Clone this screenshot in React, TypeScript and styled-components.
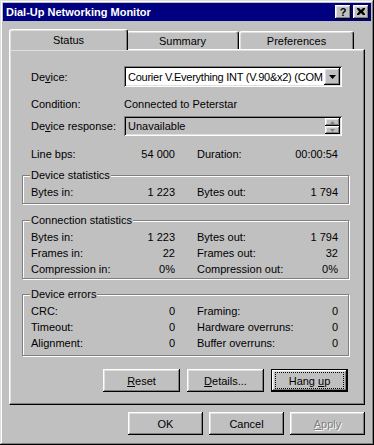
import React from "react";
import styled, { createGlobalStyle, css } from "styled-components";

const face = "#c0c0c0";
const font = `"Liberation Sans", Arial, sans-serif`;

const raised = css`
    box-shadow: inset -1px -1px 0 #000, inset 1px 1px 0 #fff, inset -2px -2px 0 #808080, inset 2px 2px 0 #dfdfdf;
`;

const sunken = css`
    box-shadow: inset 1px 1px 0 #808080, inset -1px -1px 0 #fff, inset 2px 2px 0 #000, inset -2px -2px 0 #dfdfdf;
`;

const GlobalStyle = createGlobalStyle`
    html, body {
        margin: 0;
        padding: 0;
        background: ${face};
    }
    body {
        font-family: ${font};
        font-size: 11px;
        color: #000;
    }
`;

const Window = styled.div`
    width: 374px;
    height: 445px;
    box-sizing: border-box;
    padding: 3px;
    background: ${face};
    display: flex;
    flex-direction: column;
    box-shadow: inset -1px -1px 0 #000, inset 1px 1px 0 #dfdfdf, inset -2px -2px 0 #808080, inset 2px 2px 0 #fff;
`;

const TitleBar = styled.div`
    height: 18px;
    background: #000080;
    display: flex;
    align-items: center;
    padding: 0 2px 0 3px;
`;

const Title = styled.span`
    flex: 1;
    color: #fff;
    font-weight: bold;
    font-size: 11px;
    white-space: nowrap;
`;

const CaptionButton = styled.div`
    width: 16px;
    height: 14px;
    box-sizing: border-box;
    background: ${face};
    display: flex;
    align-items: center;
    justify-content: center;
    font-weight: bold;
    font-size: 11px;
    line-height: 14px;
    padding-bottom: 1px;
    & + & {
        margin-left: 2px;
    }
    ${raised}
`;

const Body = styled.div`
    flex: 1;
    display: flex;
    flex-direction: column;
    padding: 8px 6px 7px 6px;
`;

const TabStrip = styled.div`
    height: 20px;
    display: flex;
    align-items: flex-end;
    padding-left: 2px;
`;

const Tab = styled.div<{ $active?: boolean; $w: number }>`
    width: ${(p) => p.$w}px;
    height: 18px;
    box-sizing: border-box;
    border-top: 1px solid #fff;
    border-left: 1px solid #fff;
    border-right: 1px solid #000;
    border-radius: 3px 3px 0 0;
    box-shadow: inset -1px 0 0 #808080, inset 1px 1px 0 #dfdfdf;
    background: ${face};
    display: flex;
    align-items: center;
    justify-content: center;
    padding-top: 1px;
    ${(p) =>
        p.$active &&
        css`
            height: 21px;
            margin: 0 -2px -1px -2px;
            padding-top: 0;
            padding-bottom: 1px;
            position: relative;
            z-index: 1;
        `}
`;

const Panel = styled.div`
    height: 356px;
    box-sizing: border-box;
    border-top: 1px solid #fff;
    border-left: 1px solid #fff;
    border-right: 1px solid #000;
    border-bottom: 1px solid #000;
    box-shadow: inset -1px -1px 0 #808080, inset 1px 1px 0 #dfdfdf;
    padding: 16px 14px 0 12px;
    display: flex;
    flex-direction: column;
`;

const Form = styled.div`
    padding-left: 9px;
    display: flex;
    flex-direction: column;
`;

const FieldRow = styled.div<{ $h: number; $top?: number }>`
    height: ${(p) => p.$h}px;
    margin-top: ${(p) => p.$top || 0}px;
    display: flex;
    align-items: center;
    white-space: nowrap;
`;

const Label = styled.span`
    width: 93px;
    flex: none;
`;

const Field = styled.div<{ $white?: boolean; $h: number }>`
    width: 218px;
    height: ${(p) => p.$h}px;
    box-sizing: border-box;
    padding: 2px;
    display: flex;
    align-items: center;
    background: ${(p) => (p.$white ? "#fff" : face)};
    ${sunken}
`;

const FieldText = styled.span<{ $tight?: boolean }>`
    flex: 1;
    padding-left: 2px;
    white-space: nowrap;
    overflow: hidden;
    letter-spacing: ${(p) => (p.$tight ? "-0.25px" : "0")};
`;

const DropButton = styled.div`
    width: 16px;
    height: 17px;
    flex: none;
    box-sizing: border-box;
    background: ${face};
    display: flex;
    align-items: center;
    justify-content: center;
    ${raised}
`;

const Spin = styled.div`
    width: 15px;
    flex: none;
    display: flex;
    flex-direction: column;
`;

const SpinButton = styled.div`
    height: 8px;
    box-sizing: border-box;
    background: ${face};
    display: flex;
    align-items: center;
    justify-content: center;
    ${raised}
`;

const StatGrid = styled.div`
    display: grid;
    grid-template-columns: 144px 141px;
    grid-auto-rows: 16px;
    column-gap: 22px;
    white-space: nowrap;
`;

const Stat = styled.div`
    display: flex;
    align-items: center;
    justify-content: space-between;
`;

const Group = styled.fieldset<{ $top: number; $bottom: number }>`
    margin: ${(p) => p.$top}px 1px 0 0;
    min-width: 0;
    padding: 2px 0 ${(p) => p.$bottom}px 8px;
    border: 1px solid #808080;
    box-shadow: 1px 1px 0 #fff, inset 1px 1px 0 #fff;
`;

const Legend = styled.legend`
    margin-left: -1px;
    padding: 0 1px;
    line-height: 13px;
    font-size: 11px;
    background: ${face};
`;

const ButtonRow = styled.div<{ $gap: number; $top: number; $right?: number }>`
    display: flex;
    justify-content: flex-end;
    gap: ${(p) => p.$gap}px;
    margin-top: ${(p) => p.$top}px;
    padding-right: ${(p) => p.$right || 0}px;
`;

const Button = styled.button<{ $w: number; $default?: boolean }>`
    width: ${(p) => p.$w}px;
    height: 23px;
    box-sizing: border-box;
    border: 0;
    padding: 0;
    background: ${face};
    font-family: ${font};
    font-size: 11px;
    color: #000;
    display: flex;
    align-items: center;
    justify-content: center;
    white-space: pre;
    ${raised}
    ${(p) =>
        p.$default &&
        css`
            padding: 3px 4px;
            box-shadow: inset 0 0 0 1px #000, inset -2px -2px 0 #000, inset 2px 2px 0 #fff, inset -3px -3px 0 #808080,
                inset 3px 3px 0 #dfdfdf;
        `}
    &:disabled {
        color: #808080;
        text-shadow: 1px 1px 0 #fff;
    }
`;

const FocusRing = styled.span`
    flex: 1;
    align-self: stretch;
    border: 1px dotted #000;
    display: flex;
    align-items: center;
    justify-content: center;
`;

const DownArrow = ({ color = "#000" }: { color?: string }) => (
    <svg width="7" height="4" viewBox="0 0 7 4">
        <polygon points="0,0 7,0 3.5,4" fill={color} />
    </svg>
);

const SmallArrow = ({ up }: { up?: boolean }) => (
    <svg width="5" height="3" viewBox="0 0 5 3">
        <polygon points={up ? "2.5,0 5,3 0,3" : "0,0 5,0 2.5,3"} fill="#808080" />
    </svg>
);

const CloseGlyph = () => (
    <svg width="8" height="7" viewBox="0 0 8 7">
        <path d="M0 0h2l2 2 2-2h2v1L6 3.5 8 6v1H6L4 5 2 7H0V6l2-2.5L0 1z" fill="#000" />
    </svg>
);

type StatItem = [string, string];

const StatRows: React.FC<{ items: StatItem[] }> = ({ items }) => (
    <StatGrid>
        {items.map(([label, value]) => (
            <Stat key={label}>
                <span>{label}</span>
                <span>{value}</span>
            </Stat>
        ))}
    </StatGrid>
);

export default function App() {
    return (
        <>
            <GlobalStyle />
            <Window>
                <TitleBar>
                    <Title>Dial-Up Networking Monitor</Title>
                    <CaptionButton>?</CaptionButton>
                    <CaptionButton>
                        <CloseGlyph />
                    </CaptionButton>
                </TitleBar>
                <Body>
                    <TabStrip>
                        <Tab $active $w={119}>Status</Tab>
                        <Tab $w={113}>Summary</Tab>
                        <Tab $w={115}>Preferences</Tab>
                    </TabStrip>
                    <Panel>
                        <Form>
                            <FieldRow $h={21}>
                                <Label>
                                    De<u>v</u>ice:
                                </Label>
                                <Field $white $h={21}>
                                    <FieldText $tight>Courier V.Everything INT (V.90&amp;x2) (COM</FieldText>
                                    <DropButton>
                                        <DownArrow />
                                    </DropButton>
                                </Field>
                            </FieldRow>
                            <FieldRow $h={16} $top={9}>
                                <Label>Condition:</Label>
                                <span>Connected to Peterstar</span>
                            </FieldRow>
                            <FieldRow $h={20} $top={4}>
                                <Label>
                                    De<u>v</u>ice response:
                                </Label>
                                <Field $h={20}>
                                    <FieldText>Unavailable</FieldText>
                                    <Spin>
                                        <SpinButton>
                                            <SmallArrow up />
                                        </SpinButton>
                                        <SpinButton>
                                            <SmallArrow />
                                        </SpinButton>
                                    </Spin>
                                </Field>
                            </FieldRow>
                            <FieldRow $h={16} $top={10}>
                                <StatRows
                                    items={[
                                        ["Line bps:", "54 000"],
                                        ["Duration:", "00:00:54"],
                                    ]}
                                />
                            </FieldRow>
                        </Form>

                        <Group $top={7} $bottom={3}>
                            <Legend>Device statistics</Legend>
                            <StatRows
                                items={[
                                    ["Bytes in:", "1 223"],
                                    ["Bytes out:", "1 794"],
                                ]}
                            />
                        </Group>

                        <Group $top={10} $bottom={1}>
                            <Legend>Connection statistics</Legend>
                            <StatRows
                                items={[
                                    ["Bytes in:", "1 223"],
                                    ["Bytes out:", "1 794"],
                                    ["Frames in:", "22"],
                                    ["Frames out:", "32"],
                                    ["Compression in:", "0%"],
                                    ["Compression out:", "0%"],
                                ]}
                            />
                        </Group>

                        <Group $top={9} $bottom={4}>
                            <Legend>Device errors</Legend>
                            <StatRows
                                items={[
                                    ["CRC:", "0"],
                                    ["Framing:", "0"],
                                    ["Timeout:", "0"],
                                    ["Hardware overruns:", "0"],
                                    ["Alignment:", "0"],
                                    ["Buffer overruns:", "0"],
                                ]}
                            />
                        </Group>

                        <ButtonRow $gap={7} $top={13} $right={2}>
                            <Button $w={77}>
                                <span>
                                    <u>R</u>eset
                                </span>
                            </Button>
                            <Button $w={77}>
                                <span>
                                    <u>D</u>etails...
                                </span>
                            </Button>
                            <Button $w={77} $default>
                                <FocusRing>
                                    <span>
                                        Hang <u>u</u>p
                                    </span>
                                </FocusRing>
                            </Button>
                        </ButtonRow>
                    </Panel>

                    <ButtonRow $gap={6} $top={7}>
                        <Button $w={75}>OK</Button>
                        <Button $w={75}>Cancel</Button>
                        <Button $w={75} disabled>
                            <span>
                                <u>A</u>pply
                            </span>
                        </Button>
                    </ButtonRow>
                </Body>
            </Window>
        </>
    );
}
